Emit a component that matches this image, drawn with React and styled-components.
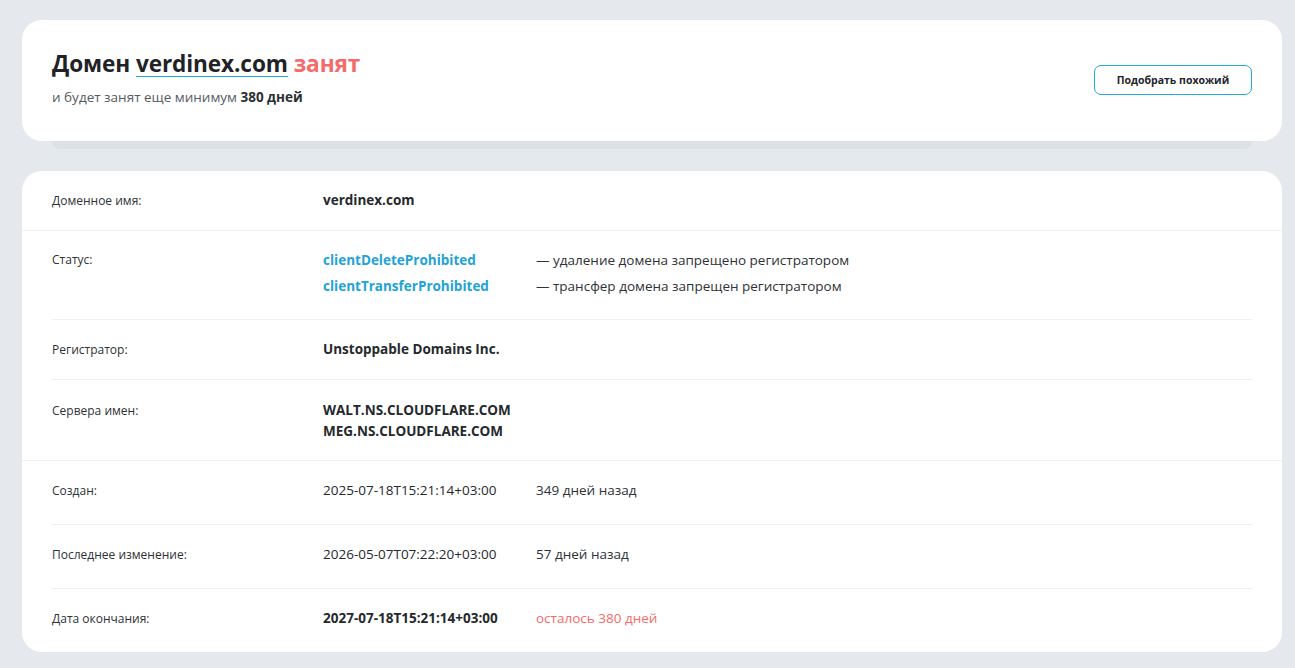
import React from "react";
import styled, { createGlobalStyle } from "styled-components";

const GlobalStyle = createGlobalStyle`
  html, body {
    margin: 0;
    padding: 0;
    background: #e5e9ed;
  }
  body {
    font-family: "Open Sans", "Noto Sans", Arial, sans-serif;
    color: #222;
    -webkit-font-smoothing: antialiased;
  }
`;

const Page = styled.div`
  width: 1260px;
  padding: 20px 13px 16px 22px;
`;

const HeroCard = styled.section`
  background: #fff;
  border-radius: 20px;
  height: 121px;
  box-sizing: border-box;
  padding: 28px 30px 0;
  display: flex;
  align-items: flex-start;
  justify-content: space-between;
`;

const HeroShelf = styled.div`
  height: 8px;
  margin: 0 30px;
  background: #dce1e6;
  border-radius: 0 0 8px 8px;
`;

const HeroText = styled.div`
  display: flex;
  flex-direction: column;
`;

const Title = styled.h1`
  margin: 0;
  font-size: 22.6px;
  line-height: 32px;
  font-weight: 700;
  color: #1f2328;
  letter-spacing: -0.1px;
`;

/* domain name with a thin blue rule just under the baseline */
const DomainLink = styled.span`
  display: inline-block;
  line-height: 25px;
  border-bottom: 1px solid #1aa6dc;
`;

const Busy = styled.span`
  color: #f36b6b;
`;

const Subtitle = styled.p`
  margin: 8px 0 0;
  font-size: 13.5px;
  line-height: 18px;
  color: #555b61;
  b {
    color: #2b2f33;
    font-weight: 700;
  }
`;

const OutlineButton = styled.button`
  width: 158px;
  height: 30px;
  margin-top: 17px;
  border: 1px solid #22a8dc;
  border-radius: 7px;
  background: #fff;
  font-family: inherit;
  font-size: 10.5px;
  font-weight: 700;
  color: #22262a;
  cursor: pointer;
`;

const InfoCard = styled.section`
  margin-top: 22px;
  background: #fff;
  border-radius: 20px;
  overflow: hidden;
`;

const Group = styled.div`
  & + & {
    border-top: 1px solid #eef1f3;
  }
`;

const Row = styled.div`
  display: grid;
  grid-template-columns: 271px 213px 1fr;
  margin: 0 30px;
  padding: ${(p) => p.$top}px 0 ${(p) => p.$bottom}px;
  & + & {
    border-top: 1px solid #eef1f3;
  }
`;

const Label = styled.div`
  font-size: 12px;
  line-height: ${(p) => p.$lh}px;
  color: #2e3236;
`;

const Values = styled.div`
  grid-column: ${(p) => (p.$wide ? "2 / 4" : "2")};
  display: flex;
  flex-direction: column;
`;

const Value = styled.div`
  font-size: 13.5px;
  line-height: ${(p) => p.$lh}px;
  font-weight: ${(p) => (p.$bold ? 700 : 400)};
  color: #25292d;
  white-space: nowrap;
`;

const StatusCode = styled.div`
  font-size: 13.5px;
  line-height: 20px;
  font-weight: 700;
  color: #22a3d6;
`;

const Note = styled.div`
  font-size: 13.5px;
  line-height: ${(p) => p.$lh}px;
  color: ${(p) => (p.$alert ? "#f36b6b" : "#2e3236")};
`;

const StatusList = styled.div`
  grid-column: 2 / 4;
  display: grid;
  grid-template-columns: 213px 1fr;
  row-gap: 6px;
`;

const statuses = [
  ["clientDeleteProhibited", "— удаление домена запрещено регистратором"],
  ["clientTransferProhibited", "— трансфер домена запрещен регистратором"],
];

const dates = [
  {
    label: "Создан:",
    value: "2025-07-18T15:21:14+03:00",
    note: "349 дней назад",
  },
  {
    label: "Последнее изменение:",
    value: "2026-05-07T07:22:20+03:00",
    note: "57 дней назад",
  },
  {
    label: "Дата окончания:",
    value: "2027-07-18T15:21:14+03:00",
    note: "осталось 380 дней",
    bold: true,
    alert: true,
  },
];

export default function App() {
  return (
    <>
      <GlobalStyle />
      <Page>
        <HeroCard>
          <HeroText>
            <Title>
              Домен <DomainLink>verdinex.com</DomainLink> <Busy>занят</Busy>
            </Title>
            <Subtitle>
              и будет занят еще минимум <b>380 дней</b>
            </Subtitle>
          </HeroText>
          <OutlineButton>Подобрать похожий</OutlineButton>
        </HeroCard>
        <HeroShelf />

        <InfoCard>
          <Group>
            <Row $top={20} $bottom={20}>
              <Label $lh={19}>Доменное имя:</Label>
              <Values $wide>
                <Value $bold $lh={19}>verdinex.com</Value>
              </Values>
            </Row>
          </Group>

          <Group>
            <Row $top={19} $bottom={23}>
              <Label $lh={20}>Статус:</Label>
              <StatusList>
                {statuses.map(([code, text]) => (
                  <React.Fragment key={code}>
                    <StatusCode>{code}</StatusCode>
                    <Note $lh={20}>{text}</Note>
                  </React.Fragment>
                ))}
              </StatusList>
            </Row>
            <Row $top={20} $bottom={20}>
              <Label $lh={19}>Регистратор:</Label>
              <Values $wide>
                <Value $bold $lh={19}>Unstoppable Domains Inc.</Value>
              </Values>
            </Row>
            <Row $top={20} $bottom={18}>
              <Label $lh={21}>Сервера имен:</Label>
              <Values $wide>
                <Value $bold $lh={21}>WALT.NS.CLOUDFLARE.COM</Value>
                <Value $bold $lh={21}>MEG.NS.CLOUDFLARE.COM</Value>
              </Values>
            </Row>
          </Group>

          <Group>
            {dates.map((d) => (
              <Row $top={19} $bottom={23} key={d.label}>
                <Label $lh={21}>{d.label}</Label>
                <Values>
                  <Value $bold={d.bold} $lh={21}>{d.value}</Value>
                </Values>
                <Note $lh={21} $alert={d.alert}>{d.note}</Note>
              </Row>
            ))}
          </Group>
        </InfoCard>
      </Page>
    </>
  );
}
